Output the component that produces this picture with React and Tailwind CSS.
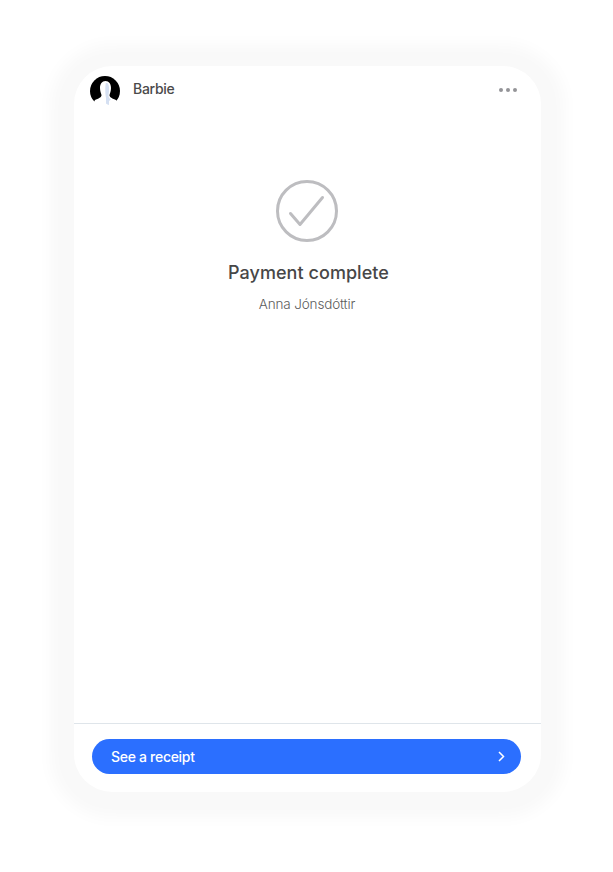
function Avatar() {
  return (
    <svg width="30" height="30" viewBox="0 0 30 30" className="shrink-0">
      <circle cx="15" cy="15" r="15" fill="#000" />
      <path d="M15.500 5C19 5 21 8 21 12c0 3-1 5-1.500 7 0 2 1.500 3 6.500 5l2 6H2l3-6c5-2 6.500-3 6.500-5-.5-2-1.500-4-1.500-7 0-4 2-7 5.500-7Z" fill="#fff" />
      <path d="M15.500 6.500 18 7.500c1 2 1.300 5 1 7.500-.2 2-.5 3.500-.5 5 .2 1.500 1 2.500 2.500 3.500l-2 1.500V29l-1.500-.5-1.500-1V22c-.5-3-.7-5-.7-8 0-3 .1-5.500.7-7.500Z" fill="#d5e0f2" />
    </svg>
  );
}

function CheckCircle() {
  return (
    <svg width="62" height="62" viewBox="0 0 62 62" fill="none" stroke="#bdbdc0" className="mr-px">
      <circle cx="31" cy="31" r="29.500" strokeWidth="3" />
      <path d="M14.500 33.500 24 44.500 46.500 17.500" strokeWidth="3" strokeLinecap="round" strokeLinejoin="round" />
    </svg>
  );
}

export default function App() {
  return (
    <div className="min-h-screen bg-white pt-[66px] pl-[74px] font-['Inter',sans-serif]">
      <div className="w-[467px] h-[726px] bg-white rounded-[38px] shadow-[0_2px_16px_24px_#f9f9f9] flex flex-col">
        {/* HEADER */}
        <div className="flex items-center justify-between pt-[10px] pl-4 pr-6">
          <div className="flex items-center gap-[13px]">
            <Avatar />
            <span className="text-sm font-medium tracking-[-0.3px] text-[#4a4a4a] relative top-[-2px]">Barbie</span>
          </div>
          <div className="flex gap-[2.5px] relative top-[-1px]">
            <span className="w-[4.5px] h-[4.5px] rounded-full bg-[#949498]" />
            <span className="w-[4.5px] h-[4.5px] rounded-full bg-[#949498]" />
            <span className="w-[4.5px] h-[4.5px] rounded-full bg-[#949498]" />
          </div>
        </div>

        {/* STATUS */}
        <div className="flex-1 flex flex-col items-center pt-[74px]">
          <CheckCircle />
          <h1 className="mt-[19px] pl-[2px] text-lg leading-[24px] font-medium tracking-[0.05px] text-[#474747]">Payment complete</h1>
          <p className="mt-[9px] mr-px text-[13.5px] leading-5 font-light tracking-[-0.15px] text-[#5c5c5c]">Anna Jónsdóttir</p>
        </div>

        {/* FOOTER */}
        <div className="border-t border-[#dfe5ea] pt-[15px] pb-[18px] pl-[18px] pr-5">
          <button className="w-full h-[35px] rounded-full bg-[#2b6fff] text-white flex items-center justify-between pl-[19px] pr-4">
            <span className="text-sm font-medium tracking-[-0.3px]">See a receipt</span>
            <svg width="7" height="11" viewBox="0 0 7 11" fill="none" stroke="#fff" strokeWidth="1.500">
              <path d="M1 1l4.500 4.500L1 10" />
            </svg>
          </button>
        </div>
      </div>
    </div>
  );
}
